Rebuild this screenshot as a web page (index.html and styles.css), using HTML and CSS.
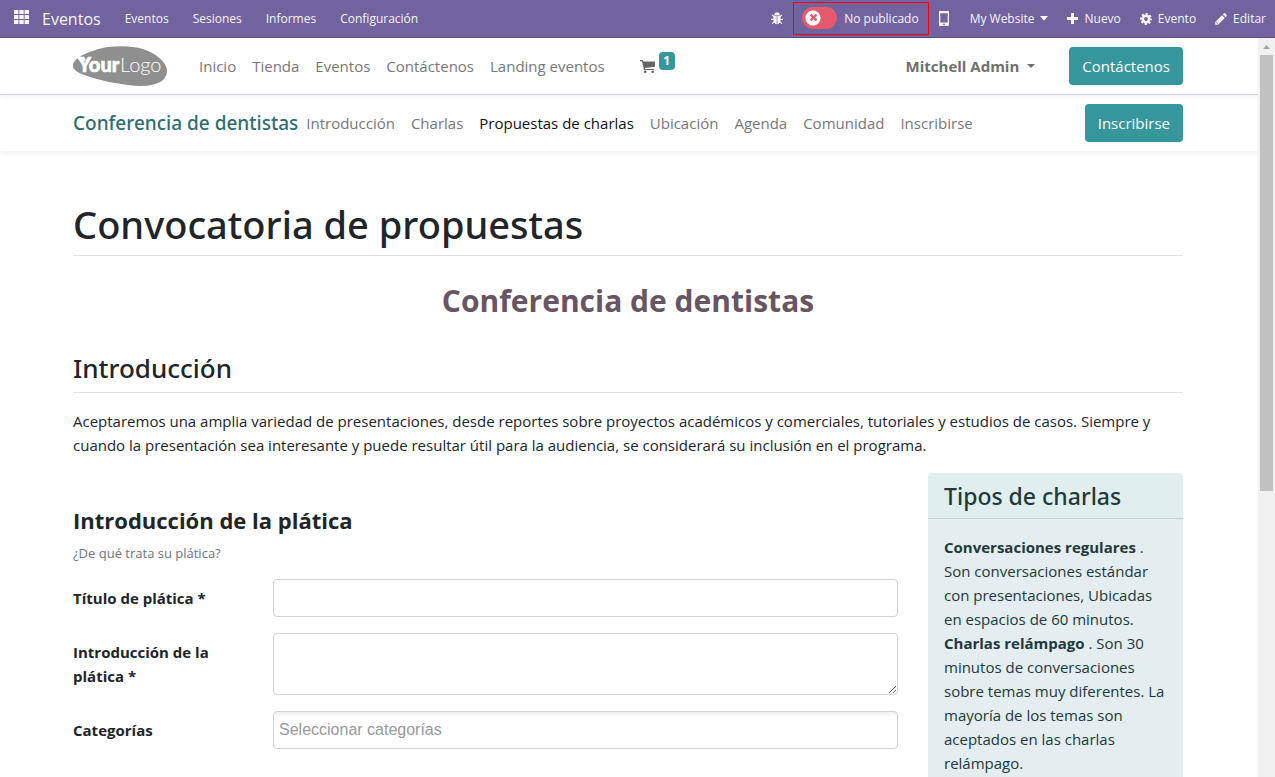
FILE: index.html
```html
<!DOCTYPE html>
<html lang="es">
<head>
<meta charset="utf-8">
<meta name="viewport" content="width=device-width, initial-scale=1">
<title>Convocatoria de propuestas</title>
<link rel="stylesheet" href="styles.css">
</head>
<body>
<header class="topbar">
  <button class="topbar-apps" type="button" aria-label="Aplicaciones">
    <svg width="15" height="14" viewBox="0 0 15 14" fill="currentColor"><path d="M0 0h4.4v4H0zM5.3 0h4.4v4H5.3zM10.6 0H15v4h-4.400zM0 5h4.400v4H0zM5.300 5h4.400v4H5.300zM10.600 5H15v4h-4.400zM0 10h4.400v4H0zM5.300 10h4.400v4H5.300zM10.600 10H15v4h-4.400z"/></svg>
  </button>
  <a class="topbar-brand" href="#">Eventos</a>
  <nav class="topbar-menu">
    <a href="#">Eventos</a>
    <a href="#">Sesiones</a>
    <a href="#">Informes</a>
    <a href="#">Configuración</a>
  </nav>
  <div class="topbar-tools">
    <button class="tool tool-bug" type="button" aria-label="Depurar">
      <svg width="12" height="13" viewBox="0 0 12 13"><path d="M3.300 3a2.700 2.800 0 0 1 5.400 0z" fill="currentColor"/><path d="M2.400 3.600h3.300v8.700C3.400 12 2.400 10.200 2.400 8zM6.300 3.600h3.300V8c0 2.200-1 4-3.300 4.300z" fill="currentColor"/><path d="M3 4.800 1 2.800M9 4.800l2-2M3 7.400H0M9 7.400h3M3.200 9.600l-2.200 2.200M8.800 9.600l2.200 2.200" stroke="currentColor" stroke-width="1.100" fill="none"/></svg>
    </button>
    <label class="publish">
      <input class="publish-switch" type="checkbox">
      <svg class="publish-mark" width="9" height="9" viewBox="0 0 9 9"><path d="m1.500 1.500 6 6m0-6-6 6" stroke="currentColor" stroke-width="2.400"/></svg>
      <span>No publicado</span>
    </label>
    <button class="tool tool-mobile" type="button" aria-label="Vista móvil">
      <svg width="10" height="15" viewBox="0 0 10 15"><path fill="currentColor" fill-rule="evenodd" d="M1.500 0h7A1.300 1.300 0 0 1 10 1.400v12A1.300 1.300 0 0 1 8.500 15h-7A1.300 1.300 0 0 1 0 13.500v-12A1.300 1.300 0 0 1 1.500 0zM1.300 2.300v9.200h7.400V2.300zM5 12.400a.9.9 0 1 0 0 1.800.9.9 0 0 0 0-1.800z"/></svg>
    </button>
    <button class="tool tool-site" type="button">My Website <svg width="8" height="5" viewBox="0 0 8 5"><path fill="currentColor" d="M0 0h8L4 4.800z"/></svg></button>
    <button class="tool" type="button"><svg width="11" height="11" viewBox="0 0 11 11"><path fill="currentColor" d="M4 0h3v4h4v3H7v4H4V7H0V4h4z"/></svg>Nuevo</button>
    <button class="tool" type="button"><svg width="12" height="12" viewBox="0 0 12 12"><g fill="none" stroke="currentColor"><circle cx="6" cy="6" r="3.200" stroke-width="2.600"/><circle cx="6" cy="6" r="5" stroke-width="2" stroke-dasharray="2.100 1.827" stroke-dashoffset="1"/></g></svg>Evento</button>
    <button class="tool" type="button"><svg width="12" height="12" viewBox="0 0 12 12"><path fill="currentColor" d="M.2 9 7 2.200 9.900 5 3 11.800H.2zM7.800 1.400 8.900.3q.6-.5 1.200 0l1.700 1.700q.4.600 0 1.100L10.600 4.200z"/><path d="m1.200 9 1.900 1.900" stroke="#71639e" stroke-width=".8"/></svg>Editar</button>
  </div>
</header>

<div class="viewport">
  <div class="page">
    <div class="site-header">
      <div class="container bar">
        <a class="logo" href="#" aria-label="YourLogo">
          <svg width="95" height="41" viewBox="0 0 95 41">
            <path fill="#8f8f8f" d="M0 19C1 11 18 4 35 1 48-.5 60 0 70 3 85 8 95 18 94 26 93.500 35 83 40.500 66 40 47 39 24 34 10 28.500 3 25.500-.5 23 0 19z"/>
            <path fill="#fff" d="m4 10.500 7 .3 2 3-3 3-3-4-1.500 1.500z"/>
            <text class="logo-your" x="5" y="26">Your</text>
            <text class="logo-logo" x="47" y="26">Logo</text>
          </svg>
        </a>
        <nav class="nav nav-main">
          <a href="#">Inicio</a>
          <a href="#">Tienda</a>
          <a href="#">Eventos</a>
          <a href="#">Contáctenos</a>
          <a href="#">Landing eventos</a>
        </nav>
        <a class="cart" href="#" aria-label="Carrito">
          <svg width="15" height="13" viewBox="0 0 15 13"><path fill="currentColor" d="M0 0h2.800l.5 1.500H15v5.200L5 8l.2 1H14v1.100H4L2 1.200H0z"/><circle cx="5.200" cy="11.700" r="1.300" fill="currentColor"/><circle cx="12.700" cy="11.700" r="1.300" fill="currentColor"/></svg>
          <span class="cart-count">1</span>
        </a>
        <button class="user" type="button">Mitchell Admin <svg width="8" height="4" viewBox="0 0 8 4"><path fill="currentColor" d="M0 0h8L4 4z"/></svg></button>
        <a class="btn" href="#">Contáctenos</a>
      </div>
    </div>

    <div class="event-header">
      <div class="container bar">
        <a class="event-name" href="#">Conferencia de dentistas</a>
        <nav class="nav">
          <a href="#">Introducción</a>
          <a href="#">Charlas</a>
          <a class="active" href="#">Propuestas de charlas</a>
          <a href="#">Ubicación</a>
          <a href="#">Agenda</a>
          <a href="#">Comunidad</a>
          <a href="#">Inscribirse</a>
        </nav>
        <a class="btn btn-end" href="#">Inscribirse</a>
      </div>
    </div>

    <main class="container content">
      <h1 class="title">Convocatoria de propuestas</h1>
      <h2 class="event-title">Conferencia de dentistas</h2>
      <h3 class="section-title">Introducción</h3>
      <p class="lead">Aceptaremos una amplia variedad de presentaciones, desde reportes sobre proyectos académicos y comerciales, tutoriales y estudios de casos. Siempre y cuando la presentación sea interesante y puede resultar útil para la audiencia, se considerará su inclusión en el programa.</p>
      <div class="columns">
        <form class="proposal">
          <h4 class="form-title">Introducción de la plática</h4>
          <p class="form-help">¿De qué trata su plática?</p>
          <div class="field">
            <label for="talk-title">Título de plática *</label>
            <input class="control" id="talk-title" type="text">
          </div>
          <div class="field">
            <label for="talk-intro">Introducción de la plática *</label>
            <textarea class="control control-area" id="talk-intro"></textarea>
          </div>
          <div class="field">
            <label for="talk-tags">Categorías</label>
            <input class="control control-tags" id="talk-tags" type="text" placeholder="Seleccionar categorías">
          </div>
        </form>
        <aside class="card">
          <h4 class="card-title">Tipos de charlas</h4>
          <ul class="card-list">
            <li><strong>Conversaciones regulares</strong> . Son conversaciones estándar con presentaciones, Ubicadas en espacios de 60 minutos.</li>
            <li><strong>Charlas relámpago</strong> . Son 30 minutos de conversaciones sobre temas muy diferentes. La mayoría de los temas son aceptados en las charlas relámpago.</li>
          </ul>
        </aside>
      </div>
    </main>
  </div>
  <div class="scrollbar" aria-hidden="true">
    <svg class="scroll-arrow" width="7" height="4" viewBox="0 0 7 4"><path fill="#a3a3a3" d="M0 4h7L3.500 0z"/></svg>
    <div class="scroll-thumb"></div>
  </div>
</div>
</body>
</html>
```
FILE: styles.css
```css
* { box-sizing: border-box; }

body {
  margin: 0;
  height: 100vh;
  display: flex;
  flex-direction: column;
  overflow: hidden;
  background: #fff;
  color: #212529;
  font-family: "Open Sans", "Noto Sans", sans-serif;
  font-size: 15px;
  line-height: 24px;
}

h1, h2, h3, h4, p, ul { margin: 0; padding: 0; }
a { color: inherit; text-decoration: none; }
button { padding: 0; border: 0; background: none; color: inherit; font: inherit; }
svg { display: block; flex: none; }

/* Backend bar */
.topbar {
  flex: none;
  display: flex;
  align-items: center;
  height: 38px;
  padding: 0 9px 0 14px;
  border-bottom: 1px solid #5a4f7f;
  background: #71639e;
  color: #f6f5fa;
  font-size: 12px;
  white-space: nowrap;
}
.topbar-apps { margin: 0 13px 3px 0; }
.topbar-brand { margin-right: 24px; font-size: 16px; }
.topbar-menu { display: flex; gap: 24px; }
.topbar-tools { display: flex; align-items: center; margin-left: auto; }
.tool { display: flex; align-items: center; gap: 6px; margin-left: 19px; }
.tool-bug { margin: 0 10px 0 0; }
.tool-mobile { margin: 0 2px 0 10px; }
.publish {
  position: relative;
  display: flex;
  align-items: center;
  gap: 7px;
  height: 33px;
  padding: 0 9px 0 8px;
  border: 1px solid #f00;
}
.publish-switch {
  appearance: none;
  width: 35px;
  height: 22px;
  margin: 0 0 2px;
  border-radius: 11px;
  background: radial-gradient(circle at 11px 11px, #fff 7px, #e6586c 8px);
}
.publish-mark { position: absolute; left: 15px; top: 10px; color: #e6586c; }

.viewport { flex: 1; min-height: 0; display: flex; }
.page { flex: 1; min-width: 0; overflow: hidden; }
.container { max-width: 1140px; margin: 0 auto; padding: 0 16px 0 14px; }
.bar { display: flex; align-items: center; height: 56px; white-space: nowrap; }

/* Site header */
.site-header {
  position: relative;
  border-bottom: 1px solid #d3d1de;
  box-shadow: 0 2px 5px rgba(0, 0, 0, .05);
}
.logo { margin-right: 31px; }
.logo-your { font: 900 20px Lato, sans-serif; fill: #fff; stroke: #fff; stroke-width: .6px; }
.logo-logo { font: 300 20px Lato, sans-serif; fill: #fff; }
.nav { display: flex; gap: 16px; color: #777; }
.nav .active { color: #111; }
.cart { display: flex; align-items: center; gap: 4px; margin-left: 35px; color: #666; }
.cart-count {
  width: 16px;
  height: 18px;
  margin-bottom: 11px;
  border-radius: 4px;
  background: #35979c;
  color: #fff;
  font-size: 12px;
  font-weight: 700;
  line-height: 18px;
  text-align: center;
}
.user {
  display: flex;
  align-items: center;
  gap: 8px;
  margin: 0 34px 0 auto;
  color: #6f6f6f;
  font-weight: 700;
}
.btn {
  padding: 7px 13px;
  border-radius: 4px;
  background: #35979c;
  color: #fff;
}
.btn-end { margin-left: auto; }

.event-header { box-shadow: 0 2px 5px rgba(0, 0, 0, .07); }
.event-name { margin-right: 8px; color: #2c6e72; font-size: 19px; }

/* Page content */
.content { padding-top: 48px; }
.event-name, .title, .section-title, .card-title {
  font-family: "Noto Sans", "Open Sans", sans-serif;
  font-weight: 500;
}
.title {
  padding-bottom: 6px;
  border-bottom: 1px solid #dfe0e1;
  font-size: 38px;
  line-height: 50px;
}
.event-title {
  padding-top: 24px;
  color: #685563;
  font-size: 30px;
  font-weight: 700;
  line-height: 42px;
  text-align: center;
}
.section-title {
  margin-top: 29px;
  padding-bottom: 7px;
  border-bottom: 1px solid #dfe0e1;
  font-size: 26px;
  line-height: 34px;
}
.lead { margin: 16px 0; }
.columns { display: grid; grid-template-columns: minmax(0, 1fr) 255px; gap: 30px; }
.proposal { padding-top: 31px; }
.form-title { font-size: 22px; font-weight: 700; line-height: 32px; }
.form-help { margin: 5px 0 14px; color: #6c757d; font-size: 13px; }
.field { display: grid; grid-template-columns: 200px minmax(0, 1fr); margin-bottom: 16px; }
.field label { padding: 7px 40px 0 0; font-weight: 700; }
.control {
  width: 100%;
  height: 38px;
  padding: 6px 12px;
  border: 1px solid #ced4da;
  border-radius: 4px;
  background: #fff;
  color: #495057;
  font: inherit;
}
.control-area { display: block; height: 62px; resize: vertical; }
.control-tags {
  padding: 5px;
  background: linear-gradient(#eee, #fff 15%);
  font: 16px "Liberation Sans", sans-serif;
}
.control-tags::placeholder { color: #999; }

.card {
  border-radius: 4px;
  background: #e4eef0;
  color: #22383b;
}
.card-title {
  padding: 8px 16px 7px;
  border-bottom: 1px solid #c2d2d4;
  border-radius: 4px 4px 0 0;
  background: #e0efee;
  font-size: 23px;
  line-height: 30px;
}
.card-list { padding: 16px; list-style: none; }

/* Scrollbar */
.scrollbar {
  flex: none;
  display: flex;
  flex-direction: column;
  align-items: center;
  width: 17px;
  background: #f1f1f1;
}
.scroll-arrow { margin: 7px 0 6px; }
.scroll-thumb { width: 13px; height: 59%; background: #c1c1c1; }
```
